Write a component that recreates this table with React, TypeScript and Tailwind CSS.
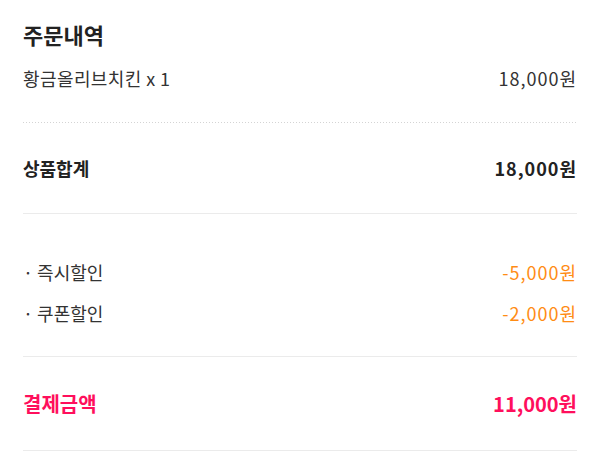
import React from 'react'

const font = { fontFamily: '"Noto Sans CJK KR", "Noto Sans", sans-serif' }

function Row({ label, amount, className }: { label: React.ReactNode; amount: string; className: string }) {
  return (
    <div className={`flex h-[30px] items-center justify-between ${className}`}>
      <span>{label}</span>
      <span className="tracking-[1px]">{amount}</span>
    </div>
  )
}

export default function App() {
  return (
    <div className="min-h-[457px] w-[600px] bg-white px-[23px]" style={font}>
      <h2 className="mt-[19px] h-[30px] text-[22px] font-bold leading-[30px] text-[#222]">주문내역</h2>
      <Row className="mt-[14px] text-[18px] tracking-[0.4px] text-[#333]" label="황금올리브치킨 x 1" amount="18,000원" />
      <div className="mt-[29px] h-px bg-[linear-gradient(to_right,#d4d4d4_1px,transparent_1px)] bg-[length:3px_1px]" />
      <div className="flex h-[90px] items-center justify-between text-[18px] font-bold text-[#222]">
        <span>상품합계</span>
        <span className="tracking-[1px]">18,000원</span>
      </div>
      <div className="h-px bg-[#ebebeb]" />
      <div className="flex flex-col gap-[11px] pb-[28px] pt-[43px] text-[18px]">
        <Row
          className="text-[#ff8c14]"
          label={<span className="text-[#333]"><span className="mr-[4px]">·</span>즉시할인</span>}
          amount="-5,000원"
        />
        <Row
          className="text-[#ff8c14]"
          label={<span className="text-[#333]"><span className="mr-[4px]">·</span>쿠폰할인</span>}
          amount="-2,000원"
        />
      </div>
      <div className="h-px bg-[#ebebeb]" />
      <div className="flex h-[93px] items-center justify-between text-[20px] font-bold text-[#ff0f5c]">
        <span>결제금액</span>
        <span>11,000원</span>
      </div>
      <div className="h-px bg-[#ebebeb]" />
    </div>
  )
}
